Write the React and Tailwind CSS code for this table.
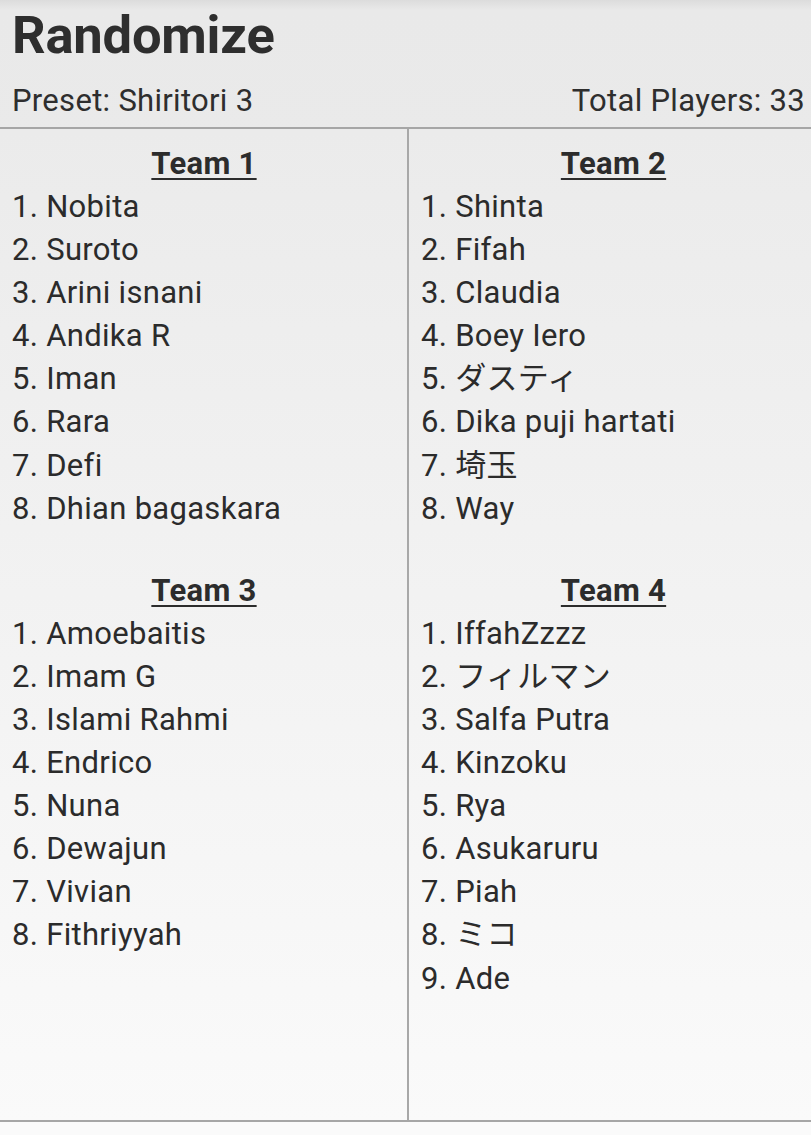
import React from "react";

const equipes = {
  esquerda: [
    { nome: "Team 1", jogadores: ["Nobita", "Suroto", "Arini isnani", "Andika R", "Iman", "Rara", "Defi", "Dhian bagaskara"] },
    { nome: "Team 3", jogadores: ["Amoebaitis", "Imam G", "Islami Rahmi", "Endrico", "Nuna", "Dewajun", "Vivian", "Fithriyyah"] },
  ],
  direita: [
    { nome: "Team 2", jogadores: ["Shinta", "Fifah", "Claudia", "Boey Iero", "ダスティ", "Dika puji hartati", "埼玉", "Way"] },
    { nome: "Team 4", jogadores: ["IffahZzzz", "フィルマン", "Salfa Putra", "Kinzoku", "Rya", "Asukaruru", "Piah", "ミコ", "Ade"] },
  ],
};

const Equipe = ({ equipe, hl }) => (
  <div className="pt-[13px] pb-[26px]">
    <h3 className={`text-center text-[31px] leading-[43px] font-bold tracking-[0.3px] text-[#2c2c2c] underline decoration-2 underline-offset-[4px] ${hl}`}>
      {equipe.nome}
    </h3>
    <ol className="pl-[12px]">
      {equipe.jogadores.map((j, i) => (
        <li key={i} className="text-[31px] leading-[43.1px] tracking-[0.3px] text-[#2b2b2b]">
          {i + 1}. {j}
        </li>
      ))}
    </ol>
  </div>
);

const App = () => {
  return (
    <main
      className="w-[811px] h-[1135px] bg-[#fafafa] overflow-hidden"
      style={{ fontFamily: "Roboto, 'Noto Sans CJK JP', sans-serif" }}
    >
      {/* cabeçalho */}
      <header className="h-[129px] bg-gradient-to-b from-[#dcdcdc] via-[#e9e9e9] via-[8%] to-[#eaeaea] pl-[12px] pr-[6px] pt-[9px] border-b-2 border-[#a6a6a6]">
        <h1 className="text-[52.5px] leading-[52px] font-bold text-[#2e2e2e] tracking-[-0.2px]">Randomize</h1>
        <div className="flex justify-between mt-[24px] text-[31px] leading-[32px] tracking-[0.3px] text-[#2e2e2e]">
          <span>Preset: Shiritori 3</span>
          <span>Total Players: 33</span>
        </div>
      </header>

      {/* times */}
      <section className="grid grid-cols-[407px_1fr] h-[993px] bg-gradient-to-b from-[#ebebeb] to-[#fafafa] border-b-2 border-[#a6a6a6]">
        <div>
          {equipes.esquerda.map((e) => (
            <Equipe key={e.nome} equipe={e} hl="pl-[1px]" />
          ))}
        </div>
        <div className="border-l-2 border-[#a8a8a8]">
          {equipes.direita.map((e) => (
            <Equipe key={e.nome} equipe={e} hl="pl-[7px]" />
          ))}
        </div>
      </section>
    </main>
  );
};

export default App;
